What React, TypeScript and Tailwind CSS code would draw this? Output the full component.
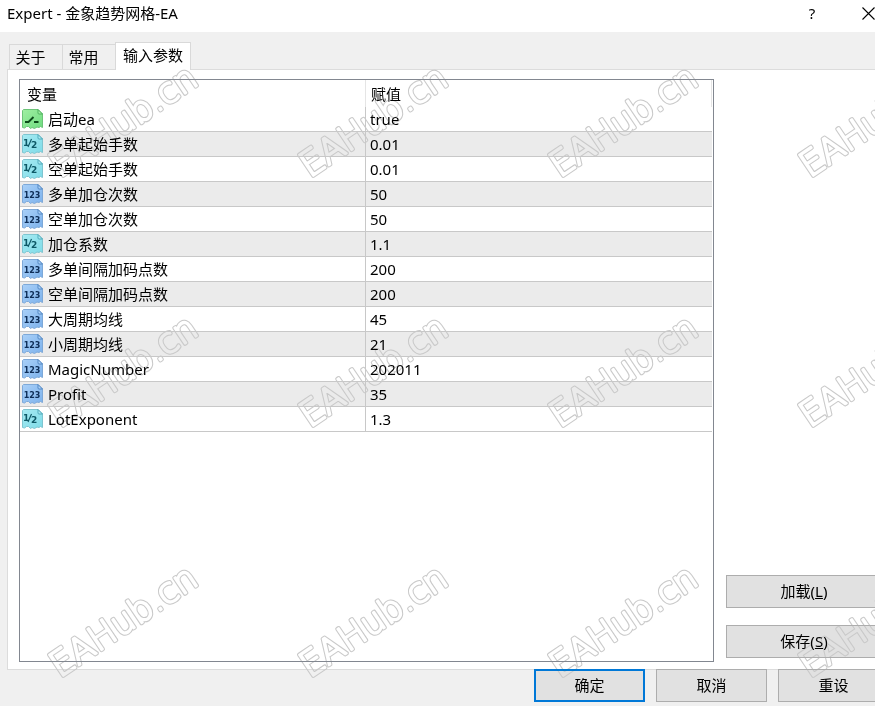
import React from "react";

type Kind = "bool" | "real" | "int";

const rows: { kind: Kind; name: string; value: string }[] = [
  { kind: "bool", name: "启动ea", value: "true" },
  { kind: "real", name: "多单起始手数", value: "0.01" },
  { kind: "real", name: "空单起始手数", value: "0.01" },
  { kind: "int", name: "多单加仓次数", value: "50" },
  { kind: "int", name: "空单加仓次数", value: "50" },
  { kind: "real", name: "加仓系数", value: "1.1" },
  { kind: "int", name: "多单间隔加码点数", value: "200" },
  { kind: "int", name: "空单间隔加码点数", value: "200" },
  { kind: "int", name: "大周期均线", value: "45" },
  { kind: "int", name: "小周期均线", value: "21" },
  { kind: "int", name: "MagicNumber", value: "202011" },
  { kind: "int", name: "Profit", value: "35" },
  { kind: "real", name: "LotExponent", value: "1.3" },
];

const palette: Record<Kind, { from: string; to: string; edge: string; fold: string; ink: string }> = {
  bool: { from: "#a0efa2", to: "#6fdc80", edge: "#6cc478", fold: "#3fa552", ink: "#0c4a1a" },
  real: { from: "#a6eaf2", to: "#7fdbe8", edge: "#7fc5d0", fold: "#3f9dae", ink: "#0d5866" },
  int: { from: "#a9d0f8", to: "#7db2ec", edge: "#7ea9d8", fold: "#4379b8", ink: "#0d2d57" },
};

function Gradients() {
  return (
    <svg className="absolute h-0 w-0" aria-hidden="true">
      <defs>
        {(Object.keys(palette) as Kind[]).map((k) => (
          <linearGradient key={k} id={`paper-${k}`} x1="0" y1="0" x2="1" y2="1">
            <stop offset="0" stopColor={palette[k].from} />
            <stop offset="1" stopColor={palette[k].to} />
          </linearGradient>
        ))}
      </defs>
    </svg>
  );
}

function TypeIcon({ kind }: { kind: Kind }) {
  const c = palette[kind];
  return (
    <svg className="block h-5 w-[21px] shrink-0" viewBox="0 0 21 20" aria-hidden="true">
      <path
        d="M1.5 .5H16L20.5 5V18.5L18.5 17.5L17 18.5L15 18L12.5 19.5L10 18.5L8.5 19.5L6.5 17.5L4.5 17.5L2.5 19L.5 18.5V1.5Z"
        fill={`url(#paper-${kind})`}
        stroke={c.edge}
      />
      <path d="M16 .5V4Q16 5 17 5H20.5Z" fill={c.from} stroke={c.fold} strokeWidth=".8" />
      {kind === "bool" && (
        <path d="M3 13H6.5L11.5 8M12 13H16.5" fill="none" stroke={c.ink} strokeWidth="1.9" />
      )}
      {kind === "int" && (
        <text x="10" y="14" textAnchor="middle" fontSize="8" fontWeight="700" fill={c.ink} fontFamily="'DejaVu Sans', sans-serif">
          123
        </text>
      )}
      {kind === "real" && (
        <>
          <path d="M6 13L9.5 5" stroke={c.ink} strokeWidth="1.1" />
          <g fontWeight="700" fill={c.ink} fontFamily="'DejaVu Sans', sans-serif" fontSize="9">
            <text x="1" y="12">1</text>
            <text x="9" y="14">2</text>
          </g>
        </>
      )}
    </svg>
  );
}

function Watermark() {
  const spots = [178, 428, 678].flatMap((y) => [62, 312, 562, 812].map((x) => ({ x, y })));
  return (
    <svg className="pointer-events-none absolute inset-0 z-20 h-full w-full mix-blend-darken" aria-hidden="true">
      <defs>
        <mask id="rim" maskUnits="userSpaceOnUse" x="-10" y="-45" width="200" height="65">
          <g fontFamily="'DejaVu Sans', sans-serif" fontSize="35" fontWeight="200" strokeLinejoin="round">
            <text x="-2" y="-1" fill="#fff" stroke="#fff" strokeWidth="4">EAHub.cn</text>
            <text x="-2" y="-1" fill="#000" stroke="#000" strokeWidth="2">EAHub.cn</text>
          </g>
        </mask>
      </defs>
      {spots.map(({ x, y }) => (
        <g key={`${x}-${y}`} transform={`translate(${x} ${y}) rotate(-34)`}>
          <rect x="-10" y="-45" width="200" height="65" fill="#c8c8c8" mask="url(#rim)" />
        </g>
      ))}
    </svg>
  );
}

function PushButton({ children, className = "" }: { children: React.ReactNode; className?: string }) {
  return (
    <button type="button" className={`h-[33px] bg-[#e1e1e1] pb-0.5 text-center ${className}`}>
      {children}
    </button>
  );
}

export default function App() {
  return (
    <div className="relative overflow-hidden bg-[#f0f0f0] font-['Noto_Sans','Noto_Sans_CJK_SC',sans-serif] text-[15px] leading-5 text-black">
      <Gradients />
      <div className="-mr-5 flex min-h-screen flex-col">
        <header className="flex h-8 items-center bg-white pr-[15px] pb-1.5 pl-[7px]">
          <h1 className="flex-1">Expert - 金象趋势网格-EA</h1>
          <button type="button" aria-label="帮助" className="mr-8 w-6 text-center">
            ?
          </button>
          <button type="button" aria-label="关闭" className="flex w-6 justify-center">
            <svg className="h-[13px] w-[13px]" viewBox="0 0 13 13" aria-hidden="true">
              <path d="M.5 .5L12.5 12.5M12.5 .5L.5 12.5" stroke="#000" strokeWidth="1.1" />
            </svg>
          </button>
        </header>

        <div role="tablist" className="flex items-end pt-[10px] pl-[9px]">
          <button role="tab" type="button" aria-selected="false" className="h-[25px] w-[53px] border border-r-0 border-b-0 border-[#d9d9d9] pr-[11px]">
            关于
          </button>
          <button role="tab" type="button" aria-selected="false" className="h-[25px] w-[53px] border border-r-0 border-b-0 border-[#d9d9d9] pr-[11px]">
            常用
          </button>
          <button role="tab" type="button" aria-selected="true" className="z-10 -mb-px h-7 w-[76px] border border-b-0 border-[#d9d9d9] bg-white pb-1">
            输入参数
          </button>
        </div>

        <main className="mr-[6px] ml-[7px] flex flex-1 gap-3 border border-[#dcdcdc] bg-white pt-[9px] pr-[6px] pb-[7px] pl-[11px]">
          <div className="flex-1 border border-[#828790] pr-px">
            <table className="w-full table-fixed border-separate border-spacing-0">
              <colgroup>
                <col className="w-[345px]" />
                <col />
              </colgroup>
              <thead>
                <tr className="h-[27px] text-left">
                  <th scope="col" className="p-0 pl-[7px] font-normal">变量</th>
                  <th scope="col" className="border-x border-[#e5e5e5] p-0 pl-[5px] font-normal">赋值</th>
                </tr>
              </thead>
              <tbody>
                {rows.map((r) => (
                  <tr key={r.name} className="h-[25px] even:bg-[#ebebeb]">
                    <td className="border-b border-[#c8c8c8] p-0 pl-[2px]">
                      <div className="flex h-6 items-center gap-[5px]">
                        <TypeIcon kind={r.kind} />
                        {r.name}
                      </div>
                    </td>
                    <td className="border-b border-l border-[#c8c8c8] p-0 pl-1">{r.value}</td>
                  </tr>
                ))}
              </tbody>
            </table>
          </div>
          <div className="flex w-[156px] flex-col justify-end gap-[17px] pb-1">
            <PushButton className="border border-[#adadad]">
              加载(<u>L</u>)
            </PushButton>
            <PushButton className="border border-[#adadad]">
              保存(<u>S</u>)
            </PushButton>
          </div>
        </main>

        <footer className="z-10 -mt-px flex justify-end gap-[11px] pr-[6px] pb-1">
          <PushButton className="w-[111px] border-2 border-[#0078d7]">确定</PushButton>
          <PushButton className="w-[111px] border border-[#adadad]">取消</PushButton>
          <PushButton className="w-[111px] border border-[#adadad]">重设</PushButton>
        </footer>
      </div>
      <Watermark />
    </div>
  );
}
